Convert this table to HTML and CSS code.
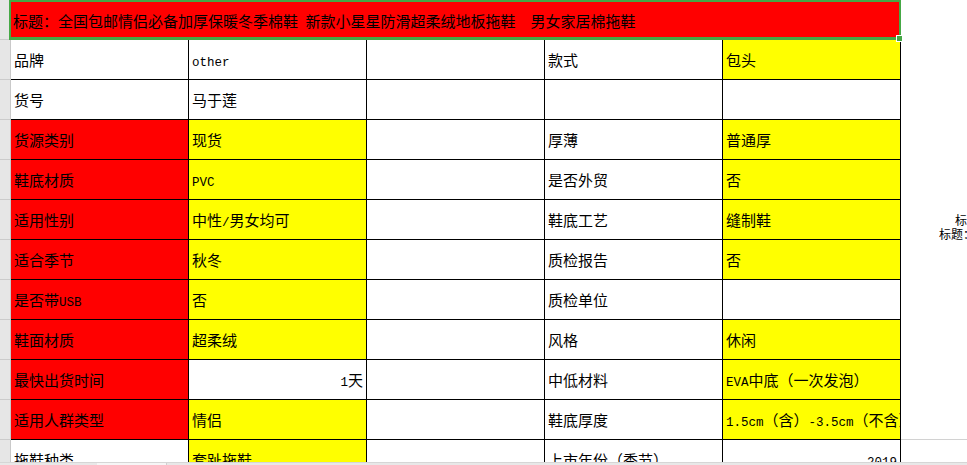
FILE: index.html
```html
<!DOCTYPE html>
<html lang="zh-CN">
<head>
<meta charset="utf-8">
<title>商品属性表</title>
<link rel="stylesheet" href="styles.css">
</head>
<body>
<div class="app">
  <div class="main">
    <div class="gutter">
      <div class="g-row"></div><div class="g-row"></div><div class="g-row"></div><div class="g-row"></div>
      <div class="g-row"></div><div class="g-row"></div><div class="g-row"></div><div class="g-row"></div>
      <div class="g-row"></div><div class="g-row"></div><div class="g-row"></div><div class="g-row"></div>
    </div>
    <div class="sheet">
      <div class="title">标题：全国包邮情侣必备加厚保暖冬季棉鞋<span class="lat"> </span>新款小星星防滑超柔绒地板拖鞋<span class="lat">  </span>男女家居棉拖鞋<span class="handle"></span></div>
      <div class="grid">
        <div class="c">品牌</div><div class="c"><span class="lat">other</span></div><div class="c"></div><div class="c">款式</div><div class="c y">包头</div>
        <div class="c">货号</div><div class="c">马于莲</div><div class="c"></div><div class="c"></div><div class="c"></div>
        <div class="c r">货源类别</div><div class="c y">现货</div><div class="c"></div><div class="c">厚薄</div><div class="c y">普通厚</div>
        <div class="c r">鞋底材质</div><div class="c y"><span class="lat">PVC</span></div><div class="c"></div><div class="c">是否外贸</div><div class="c y">否</div>
        <div class="c r">适用性别</div><div class="c y">中性<span class="lat">/</span>男女均可</div><div class="c"></div><div class="c">鞋底工艺</div><div class="c y">缝制鞋</div>
        <div class="c r">适合季节</div><div class="c y">秋冬</div><div class="c"></div><div class="c">质检报告</div><div class="c y">否</div>
        <div class="c r">是否带<span class="lat">USB</span></div><div class="c y">否</div><div class="c"></div><div class="c">质检单位</div><div class="c"></div>
        <div class="c r">鞋面材质</div><div class="c y">超柔绒</div><div class="c"></div><div class="c">风格</div><div class="c y">休闲</div>
        <div class="c r">最快出货时间</div><div class="c num"><span class="lat">1</span>天</div><div class="c"></div><div class="c">中低材料</div><div class="c y"><span class="lat">EVA</span>中底（一次发泡）</div>
        <div class="c r">适用人群类型</div><div class="c y">情侣</div><div class="c"></div><div class="c">鞋底厚度</div><div class="c y"><span class="lat">1.5cm</span>（含）<span class="lat">-3.5cm</span>（不含）</div>
        <div class="c">拖鞋种类</div><div class="c y">套趾拖鞋</div><div class="c"></div><div class="c">上市年份（季节）</div><div class="c num"><span class="lat">2019</span></div>
      </div>
    </div>
    <div class="side">
      <div class="side-top">
        <div class="side-l1">标题</div>
        <div class="side-l2">标题：全国</div>
      </div>
      <div class="side-line"></div>
    </div>
  </div>
  <div class="tabs"><div class="tabs-left"></div><div class="tab"></div><div class="tabs-rest"></div></div>
</div>
</body>
</html>
```

FILE: styles.css
```css
* { box-sizing: border-box; }

html, body {
  margin: 0;
  padding: 0;
  background: #ffffff;
}

body {
  width: 967px;
  height: 465px;
  overflow: hidden;
  font-family: "Noto Sans CJK SC", "Noto Sans", sans-serif;
  font-size: 15px;
  color: #000000;
}

.app {
  display: flex;
  flex-direction: column;
  width: 967px;
  height: 465px;
}

.main {
  display: flex;
  height: 462px;
  overflow: hidden;
}

.gutter {
  width: 11px;
  flex: 0 0 11px;
  background: #e6e6e6;
  border-right: 1px solid #c9c9c9;
  display: flex;
  flex-direction: column;
}

.g-row {
  flex: 0 0 40px;
  border-bottom: 1px solid #cbcbcb;
}

.sheet {
  width: 890px;
  flex: 0 0 890px;
  display: flex;
  flex-direction: column;
}

.title {
  position: relative;
  width: 892px;
  height: 40px;
  margin-left: -2px;
  background: #ff0000;
  border: 2px solid #45a845;
  border-bottom-width: 3px;
  padding-left: 2px;
  padding-top: 1px;
  line-height: 35px;
  white-space: pre;
}

.handle {
  position: absolute;
  right: -4px;
  bottom: -5px;
  width: 7px;
  height: 7px;
  background: #45a845;
  border: 1px solid #ffffff;
}

.grid {
  display: grid;
  grid-template-columns: repeat(5, 178px);
  grid-auto-rows: 40px;
}

.c {
  border-right: 1px solid #000000;
  border-bottom: 1px solid #000000;
  background: #ffffff;
  padding: 1px 3px 0 3px;
  line-height: 38px;
  white-space: nowrap;
  overflow: hidden;
}

.r { background: #ff0000; }
.y { background: #ffff00; }
.num { text-align: right; }

.lat {
  font-family: "Liberation Mono", monospace;
  font-size: 12.5px;
  white-space: pre;
}

.side {
  width: 66px;
  flex: 0 0 66px;
  display: flex;
  flex-direction: column;
  overflow: hidden;
}

.side-top {
  height: 439px;
  padding-top: 213px;
  font-size: 12px;
  line-height: 14px;
  white-space: nowrap;
}

.side-l1 { padding-left: 54px; }
.side-l2 { padding-left: 38px; }

.side-line {
  height: 1px;
  background: #d2d2d2;
}

.tabs {
  display: flex;
  height: 3px;
  background: #e8e8e8;
  border-top: 1px solid #d6d6d6;
}

.tabs-left { width: 97px; }
.tab {
  width: 70px;
  background: #f6f6f6;
  border-right: 1px solid #cfcfcf;
}
.tabs-rest { flex: 1; }
```
